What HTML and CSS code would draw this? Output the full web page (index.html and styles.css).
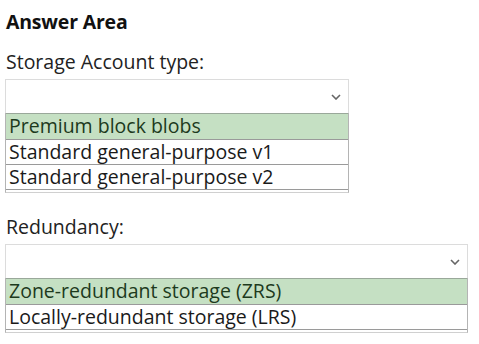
FILE: index.html
```html
<!DOCTYPE html>
<html lang="en">
<head>
    <meta charset="UTF-8">
    <title>Answer Area</title>
    <link rel="stylesheet" href="styles.css">
</head>
<body>

    <!-- title -->
    <div class="title">Answer Area</div>

    <!-- storage account type -->
    <div class="field first">
        <div class="label">Storage Account type:</div>
        <div class="dropdown narrow">
            <div class="select">
                <svg class="chevron" width="10" height="6" viewBox="0 0 10 6"><path d="M1 1 L5 5 L9 1" fill="none" stroke="#666" stroke-width="1.6"/></svg>
            </div>
            <div class="options">
                <div class="option picked">Premium block blobs</div>
                <div class="option">Standard general-purpose v1</div>
                <div class="option">Standard general-purpose v2</div>
            </div>
        </div>
    </div>

    <!-- redundancy -->
    <div class="field second">
        <div class="label">Redundancy:</div>
        <div class="dropdown wide">
            <div class="select">
                <svg class="chevron" width="10" height="6" viewBox="0 0 10 6"><path d="M1 1 L5 5 L9 1" fill="none" stroke="#666" stroke-width="1.6"/></svg>
            </div>
            <div class="options">
                <div class="option picked">Zone-redundant storage (ZRS)</div>
                <div class="option">Locally-redundant storage (LRS)</div>
            </div>
        </div>
    </div>

</body>
</html>
```

FILE: styles.css
```css
body {
    margin: 0;
    padding: 8px 5px 0 5px;
    background: #fff;
    color: #222;
    font-family: "Open Sans", "Noto Sans", sans-serif;
}

.title {
    font-size: 19.5px;
    font-weight: bold;
    line-height: 27px;
    padding-left: 1px;
    letter-spacing: -0.2px;
    color: #111;
}

.label {
    font-size: 19.5px;
    line-height: 26px;
    padding-left: 1px;
    margin-bottom: 4px;
}

.field.first {
    margin-top: 14px;
}

.field.second {
    margin-top: 21px;
}

.dropdown.narrow {
    width: 344px;
}

.dropdown.wide {
    width: 463px;
}

.select {
    display: flex;
    justify-content: flex-end;
    align-items: center;
    height: 33px;
    border: 1px solid #dcdcdc;
    border-bottom: none;
    padding-right: 6px;
}

.chevron {
    margin-right: 1px;
}

.options {
    border: 1px solid #b4b4b4;
    border-top: none;
    padding-bottom: 2px;
    border-bottom-color: #d0d0d0;
}

.option {
    height: 24px;
    line-height: 23px;
    font-size: 19.5px;
    padding-left: 3px;
    border-top: 1px solid #a8a8a8;
    color: #1a1a1a;
    white-space: nowrap;
}

.option + .option {
    border-top-color: #9a9a9a;
}

.option.picked {
    height: 25px;
    line-height: 24px;
    background: #c5e0c3;
    color: #1d3a1d;
    border-top-color: #9aa89a;
}

.dropdown .option:last-child {
    border-bottom: 1px solid #9a9a9a;
}
```
